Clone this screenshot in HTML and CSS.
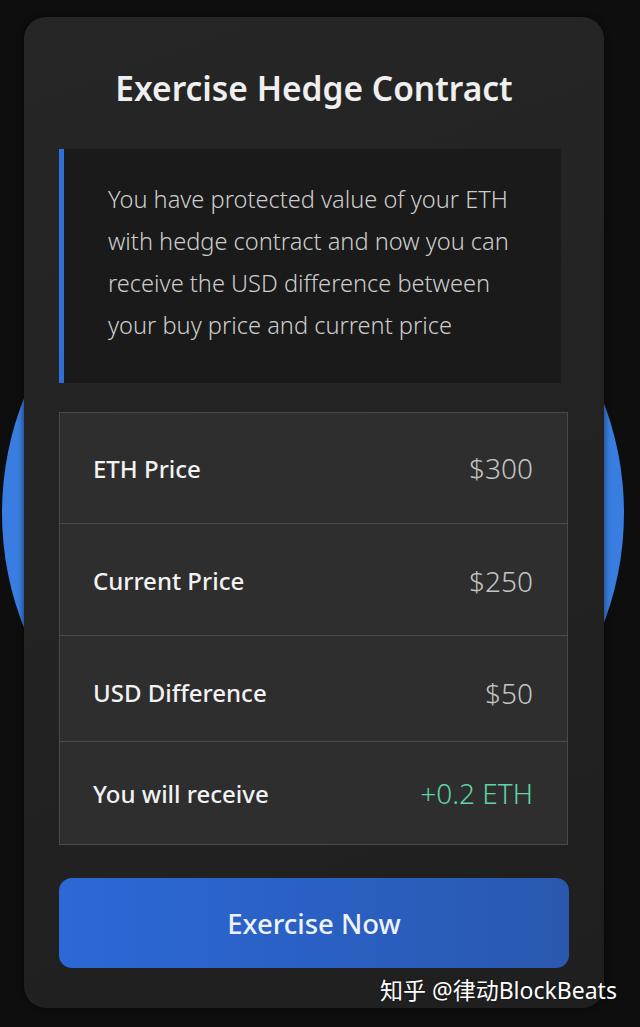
FILE: index.html
```html
<!DOCTYPE html>
<html>
<head>
    <title>Exercise Hedge Contract</title>
    <link rel="stylesheet" href="styles.css">
</head>
<body>
    <div class="page">
        <div class="backdrop-circle"></div>

        <div class="card">
            <h1 class="card-title">Exercise Hedge Contract</h1>

            <div class="notice">
                <p>You have protected value of your ETH with hedge contract and now you can receive the USD difference between your buy price and current price</p>
            </div>

            <div class="summary">
                <div class="summary-row row-1">
                    <span class="row-label">ETH Price</span>
                    <span class="row-value">$300</span>
                </div>
                <div class="summary-row row-2">
                    <span class="row-label">Current Price</span>
                    <span class="row-value">$250</span>
                </div>
                <div class="summary-row row-3">
                    <span class="row-label">USD Difference</span>
                    <span class="row-value">$50</span>
                </div>
                <div class="summary-row row-4">
                    <span class="row-label">You will receive</span>
                    <span class="row-value positive">+0.2 ETH</span>
                </div>
            </div>

            <button class="exercise-button">Exercise Now</button>
        </div>

        <div class="watermark">知乎 @律动BlockBeats</div>
    </div>
</body>
</html>
```

FILE: styles.css
```css
* {
    box-sizing: border-box;
}

body {
    margin: 0;
    background-color: #0e0e0e;
    font-family: 'Noto Sans', 'Open Sans', Arial, sans-serif;
    color: #f0f0f0;
}

.page {
    position: relative;
    width: 640px;
    height: 1027px;
    padding: 17px 36px 0 24px;
    overflow: hidden;
}

/* Circulo azul detras de la tarjeta */
.backdrop-circle {
    position: absolute;
    left: 2px;
    top: 202px;
    width: 622px;
    height: 622px;
    border-radius: 50%;
    background-color: #3a7de0;
}

.card {
    position: relative;
    width: 580px;
    height: 991px;
    padding: 0 35px;
    border-radius: 22px;
    background: linear-gradient(160deg, #262626 0%, #222222 60%, #1f1f1f 100%);
    box-shadow: 0 0 6px rgba(0, 0, 0, 0.6);
}

.card-title {
    margin: 0;
    height: 132px;
    padding-top: 50px;
    text-align: center;
    font-size: 33.5px;
    font-weight: 600;
    line-height: 42px;
    color: #efefef;
}

.notice {
    width: 502px;
    height: 234px;
    padding: 29px 36px 0 44px;
    border-left: 5px solid #2f6fd6;
    background-color: #1a1a1a;
}

.notice p {
    margin: 0;
    font-size: 23.6px;
    font-weight: 300;
    line-height: 42px;
    color: #cdcdcd;
}

.summary {
    width: 509px;
    margin-top: 29px;
    border: 1px solid #4a4a4a;
    background-color: #2e2e2e;
}

.summary-row {
    display: flex;
    justify-content: space-between;
    align-items: center;
    padding: 0 34px 0 33px;
    border-top: 1px solid #4a4a4a;
}

.summary-row:first-child {
    border-top: none;
}

.row-1 { height: 110px; }
.row-2 { height: 112px; padding-top: 2px; }
.row-3 { height: 106px; padding-top: 8px; }
.row-4 { height: 103px; }

.row-label {
    font-size: 24px;
    font-weight: 500;
    color: #f2f2f2;
}

.row-value {
    font-size: 28px;
    font-weight: 300;
    color: #c4c4c4;
}

.row-value.positive {
    color: #5fd3a6;
}

.exercise-button {
    display: block;
    width: 510px;
    height: 90px;
    margin-top: 33px;
    border: none;
    border-radius: 13px;
    background: linear-gradient(90deg, #2b69d6 0%, #2a5fc2 55%, #2a58ae 100%);
    font-family: 'Noto Sans', 'Open Sans', Arial, sans-serif;
    font-size: 27.5px;
    font-weight: 500;
    color: #eef2fb;
}

.watermark {
    position: absolute;
    left: 380px;
    top: 972px;
    font-family: 'Noto Sans', 'Noto Sans CJK SC', sans-serif;
    font-size: 23px;
    color: #ffffff;
    text-shadow: 0 0 2px rgba(0, 0, 0, 0.6);
}
```
